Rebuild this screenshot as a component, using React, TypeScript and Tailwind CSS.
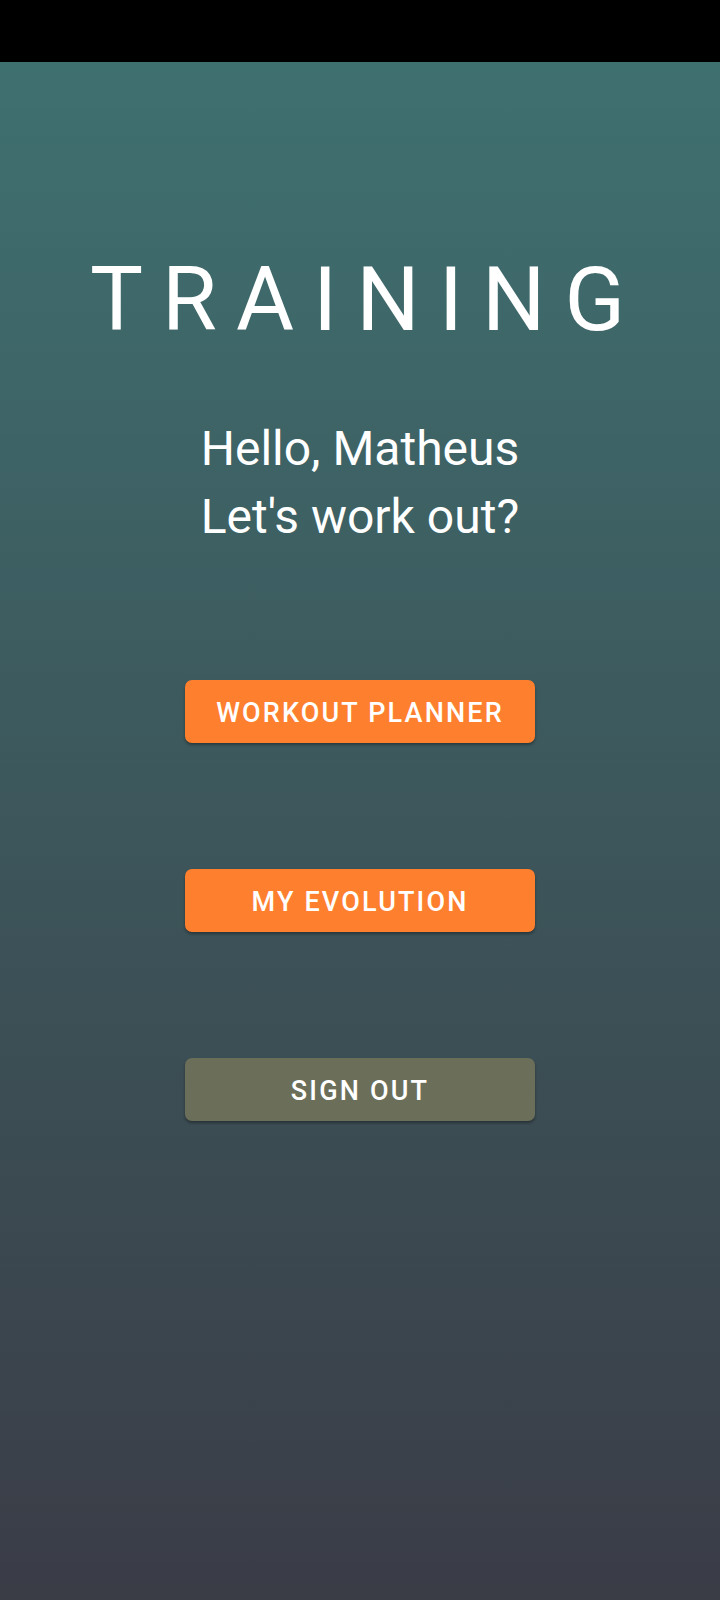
export default function App() {
  const font = { fontFamily: 'Roboto, "Noto Sans", sans-serif' };
  return (
    <div className="w-[720px] h-[1600px] flex flex-col" style={font}>
      <div className="h-[62px] bg-black shrink-0" />
      <div className="flex-1 flex flex-col items-center bg-linear-to-b/srgb from-[#3f7070] to-[#3a3c46]">
        <div className="mt-[193px] text-[89px] leading-[89px] text-white tracking-[19px] pl-[14px]">TRAINING</div>
        <div className="mt-[71px] text-[48px] leading-[68px] text-white text-left">
          <div>Hello, Matheus</div>
          <div>Let's work out?</div>
        </div>
        <button className="mt-[129px] w-[350px] h-[63px] pt-[3px] rounded-[7px] bg-[#fe802f] text-white text-[27px] font-medium tracking-[0.08em] shadow-[0_2px_3px_rgba(0,0,0,0.35)]">
          WORKOUT PLANNER
        </button>
        <button className="mt-[126px] w-[350px] h-[63px] pt-[3px] rounded-[7px] bg-[#fe802f] text-white text-[27px] font-medium tracking-[0.08em] shadow-[0_2px_3px_rgba(0,0,0,0.35)]">
          MY EVOLUTION
        </button>
        <button className="mt-[126px] w-[350px] h-[63px] pt-[3px] rounded-[7px] bg-[#6b6f5a] text-white text-[27px] font-medium tracking-[0.08em] shadow-[0_2px_3px_rgba(0,0,0,0.35)]">
          SIGN OUT
        </button>
      </div>
    </div>
  );
}
